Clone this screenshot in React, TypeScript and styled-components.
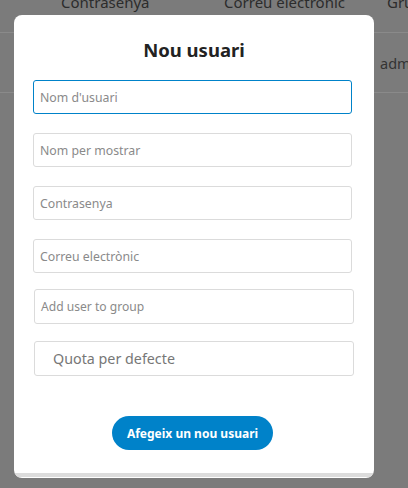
import React from 'react';
import styled, { createGlobalStyle } from 'styled-components';

const GlobalStyle = createGlobalStyle`
  html, body {
    margin: 0;
    padding: 0;
    height: 100%;
    overflow: hidden;
  }
  body {
    background: #7b7b7b;
    font-family: 'Noto Sans', 'Open Sans', sans-serif;
  }
`;

const fields = [
  { placeholder: "Nom d'usuari", focused: true },
  { placeholder: 'Nom per mostrar' },
  { placeholder: 'Contrasenya' },
  { placeholder: 'Correu electrònic' },
];

const App: React.FC = () => {
  return (
    <>
      <GlobalStyle />
      <Page>
        <Table>
          <HeaderRow>
            <HeaderCell $width={163}>Contrasenya</HeaderCell>
            <HeaderCell $width={163}>Correu electrònic</HeaderCell>
            <HeaderCell $width={60}>Grups</HeaderCell>
          </HeaderRow>
          <Row>
            <Cell>admin</Cell>
          </Row>
        </Table>
        <Modal>
          <Title>Nou usuari</Title>
          <Form>
            <Fields>
              {fields.map((f) => (
                <TextInput
                  key={f.placeholder}
                  placeholder={f.placeholder}
                  $focused={f.focused}
                  readOnly
                />
              ))}
            </Fields>
            <GroupSelect>Add user to group</GroupSelect>
            <QuotaSelect>Quota per defecte</QuotaSelect>
            <SubmitButton type="button">Afegeix un nou usuari</SubmitButton>
          </Form>
          <ModalFooter />
        </Modal>
      </Page>
    </>
  );
};

export default App;

const Page = styled.div`
  position: relative;
  width: 408px;
  height: 488px;
  overflow: hidden;
`;

const Table = styled.div`
  display: flex;
  flex-direction: column;
  color: #2c2c2c;
  font-size: 15px;
`;

const HeaderRow = styled.div`
  display: flex;
  height: 33px;
  padding-left: 61px;
  border-bottom: 1px solid #8a8a8a;
  box-sizing: border-box;
  white-space: nowrap;
`;

const HeaderCell = styled.div<{ $width: number }>`
  width: ${(p) => p.$width}px;
  flex-shrink: 0;
  margin-top: -8px;
  line-height: 20px;
`;

const Row = styled.div`
  display: flex;
  height: 60px;
  align-items: center;
  padding-left: 380px;
  border-bottom: 1px solid #8a8a8a;
  box-sizing: border-box;
  white-space: nowrap;
  font-size: 14.5px;
`;

const Cell = styled.div`
  color: #333;
`;

const Modal = styled.div`
  position: absolute;
  left: 14px;
  top: 15px;
  width: 360px;
  height: 463px;
  background: #fff;
  border-radius: 8px;
  display: flex;
  flex-direction: column;
  overflow: hidden;
  box-sizing: border-box;
  padding-bottom: 1px;
`;

const Title = styled.h2`
  margin: 20px 0 0;
  text-align: center;
  font-size: 18.5px;
  font-weight: 700;
  color: #222;
  line-height: 30px;
`;

const Form = styled.div`
  flex: 1;
  display: flex;
  flex-direction: column;
  padding: 15px 0 0 19px;
`;

const Fields = styled.div`
  display: flex;
  flex-direction: column;
  gap: 19px;
`;

const TextInput = styled.input<{ $focused?: boolean }>`
  width: 319px;
  height: 34px;
  box-sizing: border-box;
  border: 1px solid ${(p) => (p.$focused ? '#0082c9' : '#dbdbdb')};
  border-radius: 3px;
  padding: 0 6px;
  font-family: inherit;
  font-size: 12.3px;
  outline: none;
  background: #fff;
  &::placeholder {
    color: #8a8a8a;
  }
`;

const SelectBox = styled.div`
  width: 320px;
  height: 35px;
  box-sizing: border-box;
  margin-left: 1px;
  border: 1px solid #dbdbdb;
  border-radius: 3px;
  display: flex;
  align-items: center;
  color: #8a8a8a;
  white-space: nowrap;
`;

const GroupSelect = styled(SelectBox)`
  margin-top: 16px;
  padding-left: 6px;
  font-size: 12.1px;
`;

const QuotaSelect = styled(SelectBox)`
  margin-top: 17px;
  padding-left: 18px;
  font-size: 14.3px;
  color: #777;
`;

const SubmitButton = styled.button`
  align-self: flex-start;
  margin: 40px 0 0 79px;
  width: 161px;
  height: 34px;
  border: none;
  border-radius: 17px;
  background: #0082c9;
  color: #fff;
  font-family: inherit;
  font-size: 12px;
  font-weight: 700;
  padding: 0;
`;

const ModalFooter = styled.div`
  height: 4px;
  background: #dcdcdc;
  flex-shrink: 0;
`;
